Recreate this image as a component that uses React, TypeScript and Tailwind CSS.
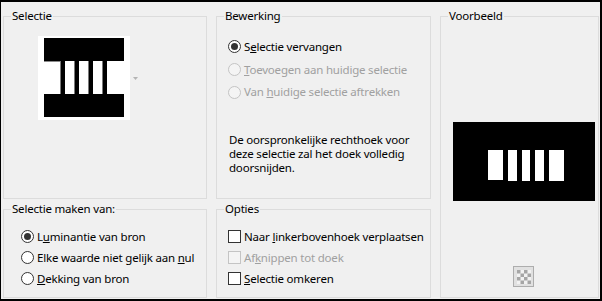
import React from "react";

const FONT = { fontFamily: '"Noto Sans", "Segoe UI", sans-serif' };

function Radio({ checked, disabled }: { checked?: boolean; disabled?: boolean }) {
  return (
    <span
      className={
        "flex h-[13px] w-[13px] shrink-0 items-center justify-center rounded-full border " +
        (disabled ? "border-[#c4c4c4] bg-[#f4f4f4]" : "border-[#333333] bg-white")
      }
    >
      {checked && <span className="block h-[7px] w-[7px] rounded-full bg-[#333333]" />}
    </span>
  );
}

function Check({ disabled }: { disabled?: boolean }) {
  return (
    <span
      className={
        "block h-[13px] w-[13px] shrink-0 border " +
        (disabled ? "border-[#c4c4c4] bg-[#f4f4f4]" : "border-[#333333] bg-white")
      }
    />
  );
}

function Group({ title, className, children }: { title: string; className?: string; children?: React.ReactNode }) {
  return (
    <div className={"flex flex-col border border-[#dcdcdc] " + (className ?? "")}>
      <span className="-mt-[9px] ml-[7px] h-[16px] w-fit whitespace-nowrap bg-[#f0f0f0] px-[1px] leading-[16px] text-black">
        {title}
      </span>
      {children}
    </div>
  );
}

function SelectieImage() {
  return (
    <svg width="92" height="84" viewBox="0 0 92 84">
      <rect x="0" y="0" width="92" height="84" fill="#ffffff" />
      <rect x="6" y="2" width="80" height="23" fill="#000" />
      <rect x="6" y="58" width="80" height="23" fill="#000" />
      <rect x="6" y="25" width="16" height="1" fill="#8a8a8a" />
      {[22, 36, 50, 64].map((x) => (
        <g key={x}>
          <rect x={x} y="25" width="1" height="33" fill="#7a7a7a" />
          <rect x={x + 1} y="25" width="4" height="33" fill="#000" />
        </g>
      ))}
    </svg>
  );
}

function PreviewImage() {
  const bars = [
    { x: 35, w: 15, h: 30 },
    { x: 55, w: 9, h: 31 },
    { x: 69, w: 8, h: 31 },
    { x: 82, w: 9, h: 31 },
    { x: 96, w: 15, h: 31 },
  ];
  return (
    <svg width="142" height="79" viewBox="0 0 142 79">
      <rect x="0" y="0" width="142" height="79" fill="#000" />
      {bars.map((b) => (
        <rect key={b.x} x={b.x} y="28" width={b.w} height={b.h} fill="#fff" />
      ))}
    </svg>
  );
}

function Checker() {
  const cells = [];
  for (let r = 0; r < 4; r++) {
    for (let c = 0; c < 4; c++) {
      if ((r + c) % 2 === 0) cells.push(<rect key={r + "-" + c} x={c * 3.5} y={r * 3.5} width="3.5" height="3.5" fill="#a6a6a6" />);
    }
  }
  return (
    <div className="flex h-[21px] w-[21px] items-center justify-center border border-[#adadad] bg-[#e1e1e1]">
      <svg width="14" height="14" viewBox="0 0 14 14">
        <rect x="0" y="0" width="14" height="14" fill="#f2f2f2" />
        {cells}
      </svg>
    </div>
  );
}

export default function App() {
  return (
    <div
      style={FONT}
      className="box-border h-[301px] w-[602px] border-b-2 border-l border-r-2 border-t-2 border-black bg-[#f0f0f0] pl-[2px] pt-[14px] text-[11.5px] tracking-[-0.2px] text-black"
    >
      <div className="grid grid-cols-[204px_215px_159px] grid-rows-[183px_89px] gap-x-[9px] gap-y-[10px] whitespace-nowrap">
        <Group title="Selectie" className="col-start-1 row-start-1">
          <div className="ml-[34px] mt-[12px] flex items-center gap-[3px]">
            <SelectieImage />
            <svg width="5" height="3" viewBox="0 0 5 3">
              <polygon points="0,0 5,0 2.5,3" fill="#b4b4b4" />
            </svg>
          </div>
        </Group>

        <Group title="Bewerking" className="col-start-2 row-start-1">
          <div className="mt-[11px] flex flex-col pl-[11px]">
            <div className="flex h-[23px] items-center gap-[3px]">
              <Radio checked />
              <span>
                S<u>e</u>lectie vervangen
              </span>
            </div>
            <div className="flex h-[23px] items-center gap-[3px] text-[#a0a0a0]">
              <Radio disabled />
              <span>
                <u>T</u>oevoegen aan huidige selectie
              </span>
            </div>
            <div className="flex h-[22px] items-center gap-[3px] text-[#a0a0a0]">
              <Radio disabled />
              <span>
                Van <u>h</u>uidige selectie aftrekken
              </span>
            </div>
          </div>
          <p className="mt-[30px] pl-[12px] leading-[14px]">
            De oorspronkelijke rechthoek voor
            <br />
            deze selectie zal het doek volledig
            <br />
            doorsnijden.
          </p>
        </Group>

        <Group title="Voorbeeld" className="col-start-3 row-span-2 row-start-1">
          <div className="ml-[12px] mt-[98px]">
            <PreviewImage />
          </div>
          <div className="mt-[65px] flex justify-center pl-[8px]">
            <Checker />
          </div>
        </Group>

        <Group title="Selectie maken van:" className="col-start-1 row-start-2">
          <div className="mt-[9px] flex flex-col pl-[17px]">
            <div className="flex h-[21px] items-center gap-[3px]">
              <Radio checked />
              <span>
                L<u>u</u>minantie van bron
              </span>
            </div>
            <div className="flex h-[21px] items-center gap-[3px]">
              <Radio />
              <span>
                Elke waarde niet gelijk aan <u>n</u>ul
              </span>
            </div>
            <div className="flex h-[21px] items-center gap-[3px]">
              <Radio />
              <span>
                <u>D</u>ekking van bron
              </span>
            </div>
          </div>
        </Group>

        <Group title="Opties" className="col-start-2 row-start-2">
          <div className="mt-[9px] flex flex-col pl-[11px]">
            <div className="flex h-[21px] items-center gap-[3px]">
              <Check />
              <span>
                Naar <u>l</u>inkerbovenhoek verplaatsen
              </span>
            </div>
            <div className="flex h-[21px] items-center gap-[3px] text-[#a0a0a0]">
              <Check disabled />
              <span>
                Af<u>k</u>nippen tot doek
              </span>
            </div>
            <div className="flex h-[21px] items-center gap-[3px]">
              <Check />
              <span>
                <u>S</u>electie omkeren
              </span>
            </div>
          </div>
        </Group>
      </div>
    </div>
  );
}
